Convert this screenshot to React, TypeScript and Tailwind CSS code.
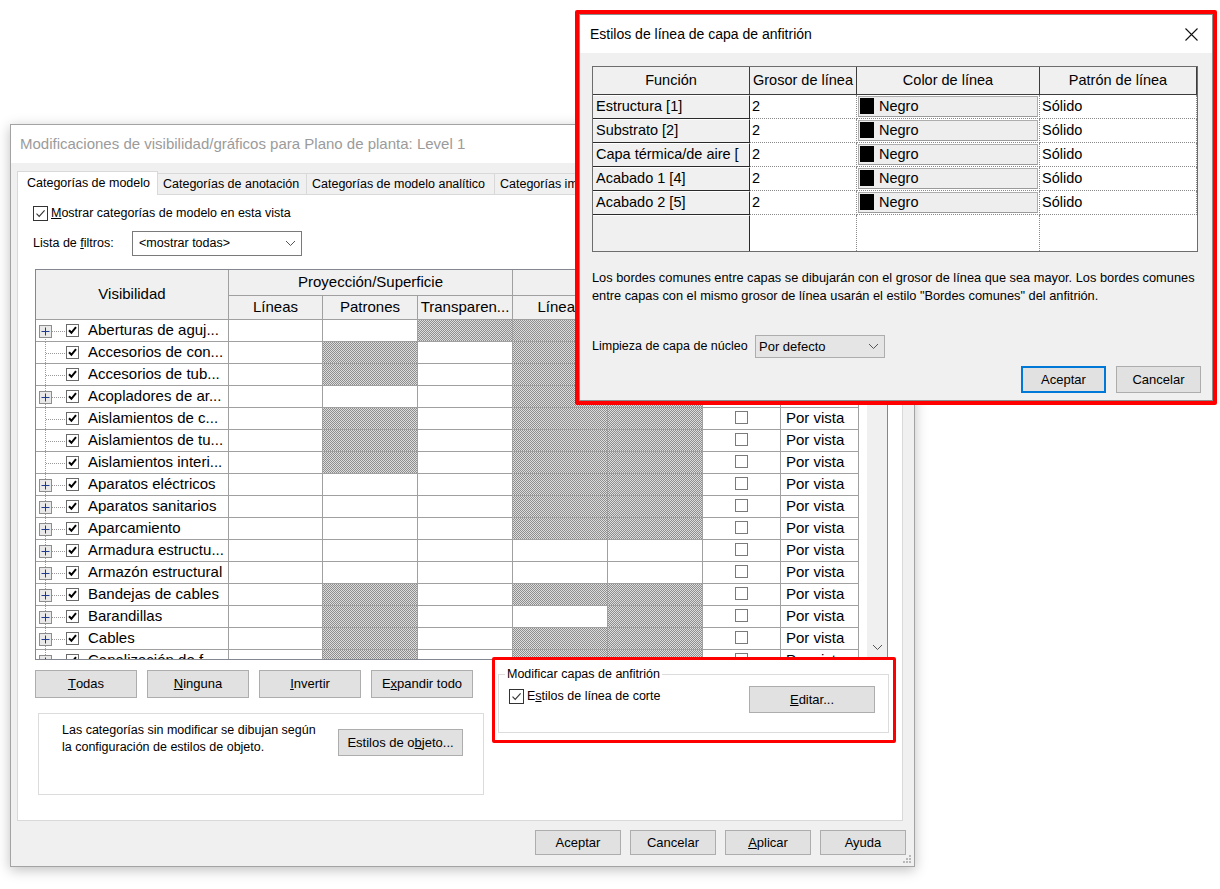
import React from "react";

const HATCH =
  "bg-[image:repeating-conic-gradient(#8e8e8e_0%_25%,#dcdcdc_0%_50%)] bg-[length:2px_2px]";

type Row = {
  name: string;
  exp: boolean;
  p1: boolean;
  t1: boolean;
  l2: boolean;
  p2: boolean;
};

const rows: Row[] = [
  { name: "Aberturas de aguj...", exp: true, p1: false, t1: true, l2: true, p2: true },
  { name: "Accesorios de con...", exp: false, p1: true, t1: false, l2: true, p2: true },
  { name: "Accesorios de tub...", exp: false, p1: true, t1: false, l2: true, p2: true },
  { name: "Acopladores de ar...", exp: true, p1: false, t1: false, l2: true, p2: true },
  { name: "Aislamientos de c...", exp: false, p1: true, t1: false, l2: true, p2: true },
  { name: "Aislamientos de tu...", exp: false, p1: true, t1: false, l2: true, p2: true },
  { name: "Aislamientos interi...", exp: false, p1: true, t1: false, l2: true, p2: true },
  { name: "Aparatos eléctricos", exp: true, p1: false, t1: false, l2: true, p2: true },
  { name: "Aparatos sanitarios", exp: true, p1: false, t1: false, l2: true, p2: true },
  { name: "Aparcamiento", exp: true, p1: false, t1: false, l2: true, p2: true },
  { name: "Armadura estructu...", exp: true, p1: false, t1: false, l2: false, p2: false },
  { name: "Armazón estructural", exp: true, p1: false, t1: false, l2: false, p2: false },
  { name: "Bandejas de cables", exp: true, p1: true, t1: false, l2: true, p2: true },
  { name: "Barandillas", exp: true, p1: true, t1: false, l2: false, p2: true },
  { name: "Cables", exp: true, p1: true, t1: false, l2: true, p2: true },
  { name: "Canalización de f...", exp: true, p1: true, t1: false, l2: true, p2: true },
];

const layers = ["Estructura [1]", "Substrato [2]", "Capa térmica/de aire [", "Acabado 1 [4]", "Acabado 2 [5]"];

// tree lines + expand box on the left of each category
function TreeGutter({ exp, first }: { exp: boolean; first: boolean }) {
  return (
    <svg width="30" height="22" viewBox="0 0 30 22" className="shrink-0">
      <line x1="9.5" y1={first ? 11 : 0} x2="9.5" y2="22" stroke="#9a9a9a" strokeDasharray="1 1" />
      <line x1="10" y1="11.5" x2="29" y2="11.5" stroke="#9a9a9a" strokeDasharray="1 1" />
      {exp && (
        <>
          <rect x="3.5" y="5.5" width="12" height="12" fill="#e9e9e9" stroke="#8d8d8d" />
          <line x1="5.5" y1="11.5" x2="13.5" y2="11.5" stroke="#1d3c8f" />
          <line x1="9.5" y1="7.5" x2="9.5" y2="15.5" stroke="#1d3c8f" />
        </>
      )}
    </svg>
  );
}

function GridCheck() {
  return (
    <span className="w-[13px] h-[13px] border border-[#6a6a6a] bg-white flex items-center justify-center shrink-0">
      <svg width="9" height="9" viewBox="0 0 9 9">
        <path d="M1 4.3 L3.4 6.8 L8 1.2" fill="none" stroke="#000" strokeWidth="2" />
      </svg>
    </span>
  );
}

function WinCheck() {
  return (
    <span className="w-[15px] h-[15px] border border-[#333] bg-white flex items-center justify-center shrink-0">
      <svg width="11" height="11" viewBox="0 0 11 11">
        <path d="M1.5 5.6 L4.2 8.4 L9.6 2.4" fill="none" stroke="#333" strokeWidth="1.1" />
      </svg>
    </span>
  );
}

function Btn({ children, w = "w-[86px]", h = "h-[25px]" }: { children: React.ReactNode; w?: string; h?: string }) {
  return (
    <div className={`${w} ${h} bg-[#e1e1e1] border border-[#adadad] text-[13px] flex items-center justify-center shrink-0`}>
      {children}
    </div>
  );
}

function Chevron() {
  return (
    <svg width="11" height="7" viewBox="0 0 11 7">
      <polyline points="1,1 5.5,5.5 10,1" fill="none" stroke="#555" strokeWidth="1" />
    </svg>
  );
}

const cell = "border-r border-b border-[#a0a0a0]";
const head = "border-r border-b border-[#a0a0a0] bg-[#f0f0f0] flex items-center justify-center text-[15px]";

function VisibilityGrid() {
  return (
    <div className="ml-[2px] mt-[13px] w-[853px] h-[391px] border border-[#828790] bg-white flex overflow-hidden">
      <div className="w-[831px] overflow-hidden">
        <div className="grid grid-cols-[193px_94px_95px_95px_95px_95px_78px_78px] grid-rows-[26px_24px] auto-rows-[22px]">
          <div className={`${head} row-span-2`}>Visibilidad</div>
          <div className={`${head} col-span-3`}>Proyección/Superficie</div>
          {/* the cut header and the halftone/detail headers sit under the other dialog */}
          <div className={`${head} col-span-2`} />
          <div className={`${head} row-span-2`} />
          <div className={`${head} row-span-2`} />
          <div className={head}>Líneas</div>
          <div className={head}>Patrones</div>
          <div className={head}>Transparen...</div>
          <div className={head}>Líneas</div>
          <div className={head} />
          {rows.map((r, i) => (
            <React.Fragment key={r.name}>
              <div className={`${cell} flex items-center overflow-hidden whitespace-nowrap`}>
                <TreeGutter exp={r.exp} first={i === 0} />
                <GridCheck />
                <span className="ml-[9px] text-[15px]">{r.name}</span>
              </div>
              <div className={cell} />
              <div className={`${cell} ${r.p1 ? HATCH : ""}`} />
              <div className={`${cell} ${r.t1 ? HATCH : ""}`} />
              <div className={`${cell} ${r.l2 ? HATCH : ""}`} />
              <div className={`${cell} ${r.p2 ? HATCH : ""}`} />
              <div className={`${cell} flex items-center justify-center`}>
                <span className="w-[13px] h-[13px] border border-[#7a7a7a] bg-white mb-[2px]" />
              </div>
              <div className={`${cell} flex items-center pl-[5px] text-[15px]`}>{i > 3 ? "Por vista" : ""}</div>
            </React.Fragment>
          ))}
        </div>
      </div>
      <div className="w-[20px] bg-[#f0f0f0] flex flex-col justify-end items-center pb-[8px]">
        <Chevron />
      </div>
    </div>
  );
}

function BackDialog() {
  return (
    <div className="absolute left-[10px] top-[124px] w-[905px] h-[743px] border border-[#a3a3a3] bg-[#f0f0f0] shadow-[0_3px_12px_rgba(0,0,0,0.25)] flex flex-col">
      <div className="h-[38px] bg-white flex items-center pl-[9px] text-[15px] text-[#9b9b9b] shrink-0">
        Modificaciones de visibilidad/gráficos para Plano de planta: Level 1
      </div>
      <div className="flex flex-col pl-[6px] pt-[8px]">
        <div className="flex items-end h-[24px] -mb-px text-[12.5px] relative">
          <div className="h-[24px] w-[141px] bg-white border border-b-0 border-[#d9d9d9] flex items-center pl-[9px]">
            Categorías de modelo
          </div>
          <div className="h-[22px] w-[149px] border border-l-0 border-[#d9d9d9] flex items-center pl-[5px]">
            Categorías de anotación
          </div>
          <div className="h-[22px] w-[188px] border border-l-0 border-[#d9d9d9] flex items-center pl-[5px]">
            Categorías de modelo analítico
          </div>
          <div className="h-[22px] w-[150px] border border-l-0 border-[#d9d9d9] flex items-center pl-[5px] whitespace-nowrap">
            Categorías importadas
          </div>
        </div>
        <div className="w-[886px] h-[627px] bg-white border border-[#d9d9d9] flex flex-col pl-[15px] text-[12.5px]">
          <div className="mt-[10px] flex items-center gap-[3px] h-[16px]">
            <WinCheck />
            <span>
              <u>M</u>ostrar categorías de modelo en esta vista
            </span>
          </div>
          <div className="mt-[10px] flex items-center h-[25px]">
            <span className="w-[99px]">
              Lista de <u>f</u>iltros:
            </span>
            <div className="w-[170px] h-[25px] border border-[#7a7a7a] bg-white flex items-center justify-between pl-[6px] pr-[5px]">
              <span>&lt;mostrar todas&gt;</span>
              <Chevron />
            </div>
          </div>
          <VisibilityGrid />
          <div className="flex mt-[10px]">
            <div className="flex flex-col w-[461px] ml-[2px]">
              <div className="flex gap-[10px]">
                <Btn w="w-[102px]" h="h-[28px]">
                  <u>T</u>odas
                </Btn>
                <Btn w="w-[102px]" h="h-[28px]">
                  <u>N</u>inguna
                </Btn>
                <Btn w="w-[102px]" h="h-[28px]">
                  <u>I</u>nvertir
                </Btn>
                <Btn w="w-[102px]" h="h-[28px]">
                  E<u>x</u>pandir todo
                </Btn>
              </div>
              <div className="mt-[15px] ml-[3px] w-[446px] h-[82px] border border-[#dcdcdc] flex items-start pt-[8px] pl-[23px]">
                <div className="w-[276px] leading-[17px]">
                  Las categorías sin modificar se dibujan según
                  <br />
                  la configuración de estilos de objeto.
                </div>
                <div className="mt-[7px]">
                  <Btn w="w-[125px]" h="h-[27px]">
                    Estilos de o<u>b</u>jeto...
                  </Btn>
                </div>
              </div>
            </div>
            <div className="ml-[2px] -mt-[3px] w-[391px] h-[66px] relative">
              <div className="absolute inset-0 top-[7px] border border-[#dcdcdc]" />
              <div className="relative flex flex-col">
                <span className="ml-[7px] px-[2px] bg-white self-start leading-[14px]">Modificar capas de anfitrión</span>
                <div className="flex items-start mt-[5px]">
                  <div className="flex items-center gap-[3px] ml-[11px] mt-[1px] w-[240px]">
                    <WinCheck />
                    <span>
                      E<u>s</u>tilos de línea de corte
                    </span>
                  </div>
                  <Btn w="w-[126px]" h="h-[27px]">
                    <u>E</u>ditar...
                  </Btn>
                </div>
              </div>
            </div>
          </div>
        </div>
        <div className="flex justify-end gap-[9px] mt-[9px] pr-[8px] relative">
          <Btn>Aceptar</Btn>
          <Btn>Cancelar</Btn>
          <Btn>
            <u>A</u>plicar
          </Btn>
          <Btn>Ayuda</Btn>
        </div>
      </div>
      <svg className="absolute right-[2px] bottom-[2px]" width="10" height="10" viewBox="0 0 10 10">
        <g fill="#b8b8b8">
          <rect x="7" y="1" width="2" height="2" />
          <rect x="4" y="4" width="2" height="2" />
          <rect x="7" y="4" width="2" height="2" />
          <rect x="1" y="7" width="2" height="2" />
          <rect x="4" y="7" width="2" height="2" />
          <rect x="7" y="7" width="2" height="2" />
        </g>
      </svg>
    </div>
  );
}

const fHead = "border-r border-b border-[#3c3c3c] bg-[#f0f0f0] flex items-center justify-center";
const fData = "border-r border-b border-dotted border-[#8a8a8a] flex items-center pl-[2px] bg-white";

function FrontDialog() {
  return (
    <div className="absolute left-[575px] top-[10px] w-[642px] h-[395px] border-4 border-[#ff0000] rounded-[2px]">
      <div className="w-full h-full border border-[#8c8c8c] bg-[#f0f0f0] flex flex-col">
        <div className="h-[38px] bg-white flex items-center justify-between pl-[10px] pr-[14px] text-[14px] shrink-0">
          <span>Estilos de línea de capa de anfitrión</span>
          <svg width="13" height="13" viewBox="0 0 13 13">
            <path d="M0.5 0.5 L12.5 12.5 M12.5 0.5 L0.5 12.5" stroke="#111" strokeWidth="1.1" />
          </svg>
        </div>
        <div className="flex flex-col pl-[12px] pt-[13px]">
          <div className="w-[606px] h-[186px] border border-[#6d6d6d] bg-white grid grid-cols-[157px_107px_183px_157px] grid-rows-[28px_24px_24px_24px_24px_24px_1fr] text-[14.5px]">
            <div className={fHead}>Función</div>
            <div className={`${fHead} whitespace-nowrap overflow-hidden`}>Grosor de línea</div>
            <div className={fHead}>Color de línea</div>
            <div className={fHead}>Patrón de línea</div>
            {layers.map((l) => (
              <React.Fragment key={l}>
                <div className="bg-[#f0f0f0] border-t border-t-white border-r border-b border-[#2a2a2a] flex items-center pl-[3px] whitespace-nowrap overflow-hidden">
                  {l}
                </div>
                <div className={fData}>2</div>
                <div className="border-r border-b border-dotted border-[#8a8a8a] p-px">
                  <div className="h-full bg-[#eeeeee] border border-[#adadad] border-b-[#9a9a9a] flex items-end pb-[1px]">
                    <span className="w-[14px] h-[16px] bg-black ml-[1px] mr-[5px] mb-[1px]" />
                    <span className="leading-[18px]">Negro</span>
                  </div>
                </div>
                <div className={fData}>Sólido</div>
              </React.Fragment>
            ))}
            <div className="bg-[#f0f0f0] border-r border-[#2a2a2a] border-t border-t-white" />
            <div className="border-r border-dotted border-[#8a8a8a]" />
            <div className="border-r border-dotted border-[#8a8a8a]" />
            <div />
          </div>
          <div className="mt-[17px] text-[12.8px] leading-[18px] whitespace-nowrap">
            Los bordes comunes entre capas se dibujarán con el grosor de línea que sea mayor. Los bordes comunes
            <br />
            entre capas con el mismo grosor de línea usarán el estilo "Bordes comunes" del anfitrión.
          </div>
          <div className="mt-[30px] flex items-center text-[12.5px]">
            <span className="w-[163px]">Limpieza de capa de núcleo</span>
            <div className="w-[130px] h-[23px] bg-[#e5e5e5] border border-[#adadad] flex items-center justify-between pl-[3px] pr-[5px] text-[13px]">
              <span>Por defecto</span>
              <Chevron />
            </div>
          </div>
          <div className="mt-[8px] flex justify-end gap-[10px] pr-[11px]">
            <div className="w-[85px] h-[27px] bg-[#e1e1e1] border-2 border-[#0078d7] text-[13px] flex items-center justify-center">
              Aceptar
            </div>
            <Btn w="w-[85px]" h="h-[27px]">
              Cancelar
            </Btn>
          </div>
        </div>
      </div>
    </div>
  );
}

export default function App() {
  return (
    <div className="relative w-[1220px] h-[889px] bg-white overflow-hidden font-['Liberation_Sans',Arial,sans-serif] text-black">
      <BackDialog />
      {/* annotation around the host layers group */}
      <div className="absolute left-[492px] top-[657px] w-[404px] h-[86px] border-[3px] border-[#ff0000] rounded-[2px] pointer-events-none" />
      <FrontDialog />
    </div>
  );
}
